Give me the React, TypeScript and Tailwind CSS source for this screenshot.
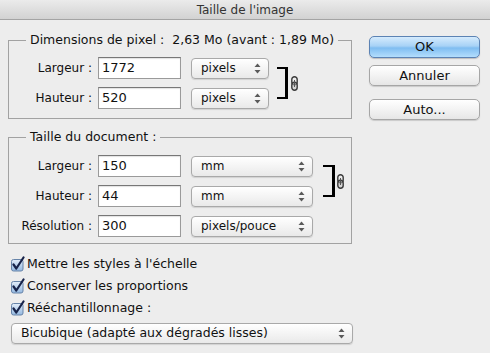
import React from "react"

const font = "font-['DejaVu_Sans','Lucida_Grande',sans-serif]"

const Arrows: React.FC = () => (
  <svg width="7" height="11" viewBox="0 0 7 11" className="shrink-0">
    <path d="M3.5 0.5 L6.5 4 L0.5 4 Z" fill="#5a5a5a" />
    <path d="M3.5 10.5 L6.5 7 L0.5 7 Z" fill="#5a5a5a" />
  </svg>
)

const Select: React.FC<{ label: string, width: string }> = ({ label, width }) => (
  <div className={ `${ width } h-[21px] flex items-center justify-between pl-[9px] pr-[7px] rounded-[4px] border border-[#a9a9a9] bg-[linear-gradient(#ffffff,#f4f4f4_50%,#e9e9e9)] shadow-[0_1px_1px_rgba(0,0,0,0.12)]` }>
    <span className="leading-none">{ label }</span>
    <Arrows />
  </div>
)

const Input: React.FC<{ value: string }> = ({ value }) => (
  <div className="w-[83px] h-[22px] flex items-center pl-[3px] bg-white border border-[#9a9a9a] border-t-[#777] shadow-[inset_0_1px_1px_rgba(0,0,0,0.12)] text-[13px]">
    { value }
  </div>
)

const Row: React.FC<{ label: string, value: string, unit: string, selectWidth: string }> = ({ label, value, unit, selectWidth }) => (
  <div className="flex items-center h-[22px]">
    <span className="w-[83px] text-right whitespace-nowrap">{ label }</span>
    <div className="ml-[6px]"><Input value={ value }/></div>
    <div className="ml-[10px]"><Select label={ unit } width={ selectWidth }/></div>
  </div>
)

const Chain: React.FC = () => (
  <svg width="7" height="15" viewBox="0 0 7 15" className="shrink-0">
    <rect x="0.8" y="0.8" width="5.4" height="8" rx="2.7" fill="none" stroke="#3a3a3a" strokeWidth="1.4" />
    <rect x="0.8" y="6.2" width="5.4" height="8" rx="2.7" fill="#bdbdbd" fillOpacity="0.5" stroke="#3a3a3a" strokeWidth="1.4" />
    <line x1="3.5" y1="4" x2="3.5" y2="11" stroke="#555" strokeWidth="1" />
  </svg>
)

const Checkbox: React.FC<{ label: string }> = ({ label }) => (
  <div className="flex items-center h-[22px]">
    <svg width="16" height="16" viewBox="0 0 16 16" className="ml-[10px] shrink-0">
      <defs>
        <linearGradient id="cb" x1="0" y1="0" x2="0" y2="1">
          <stop offset="0" stopColor="#e4eefa" />
          <stop offset="1" stopColor="#93b8e0" />
        </linearGradient>
      </defs>
      <rect x="1.5" y="3.5" width="11.5" height="11.5" rx="2" fill="url(#cb)" stroke="#6683a8" />
      <path d="M3.5 8.5 L6.3 12.5 L13.5 1.5" fill="none" stroke="#17234a" strokeWidth="2.2" strokeLinecap="round" strokeLinejoin="round" />
    </svg>
    <span className="ml-[1px] text-[12.5px]">{ label }</span>
  </div>
)

const Button: React.FC<{ label: string, primary?: boolean }> = ({ label, primary }) => (
  <div className={ primary
    ? "h-[22px] flex items-center justify-center rounded-[5px] border border-[#5c83b4] bg-[linear-gradient(#d5ebfd,#a7d2f6_45%,#7fbdf1_55%,#b3defd)] shadow-[0_1px_1px_rgba(0,0,0,0.2)] text-[13px]"
    : "h-[21px] flex items-center justify-center rounded-[5px] border border-[#a6a6a6] bg-[linear-gradient(#ffffff,#f3f3f3_50%,#e6e6e6)] shadow-[0_1px_1px_rgba(0,0,0,0.15)] text-[13px]" }>
    { label }
  </div>
)

export default function App() {
  return (
    <div className={ `${ font } w-[490px] h-[353px] bg-[#ededed] text-[12px] text-[#111] overflow-hidden` }>
      <div className="h-[20px] flex items-center justify-center bg-[linear-gradient(#ebebeb,#d2d2d2)] border-b border-[#a4a4a4] text-[#333]">
        Taille de l'image
      </div>
      <div className="flex pl-[8px]">
        <div className="w-[344px]">
          <fieldset className="mt-[12px] border border-[#a2a2a2] pb-[9px] pt-[9px]">
            <legend className="ml-[17px] px-[4px] leading-[16px] text-[12.5px]">Dimensions de pixel :&nbsp; 2,63 Mo (avant : 1,89 Mo)</legend>
            <div className="flex">
              <div className="flex flex-col gap-[8px]">
                <Row label="Largeur :" value="1772" unit="pixels" selectWidth="w-[78px]" />
                <Row label="Hauteur :" value="520" unit="pixels" selectWidth="w-[78px]" />
              </div>
              <div className="ml-[8px] mt-[10px] w-[11px] h-[32px] border-y-2 border-r-[3px] border-black" />
              <div className="ml-[3px] mt-[19px]"><Chain /></div>
            </div>
          </fieldset>
          <fieldset className="mt-[10px] border border-[#a2a2a2] pt-[10px] pb-[6px]">
            <legend className="ml-[17px] px-[4px] leading-[16px] text-[12.5px]">Taille du document :</legend>
            <div className="flex">
              <div className="flex flex-col gap-[8px]">
                <Row label="Largeur :" value="150" unit="mm" selectWidth="w-[122px]" />
                <Row label="Hauteur :" value="44" unit="mm" selectWidth="w-[122px]" />
                <Row label="Résolution :" value="300" unit="pixels/pouce" selectWidth="w-[122px]" />
              </div>
              <div className="ml-[10px] mt-[10px] w-[12px] h-[32px] border-y-2 border-r-[3px] border-black" />
              <div className="ml-[2px] mt-[19px]"><Chain /></div>
            </div>
          </fieldset>
          <div className="mt-[9px] flex flex-col -ml-[8px]">
            <Checkbox label="Mettre les styles à l'échelle" />
            <Checkbox label="Conserver les proportions" />
            <Checkbox label="Rééchantillonnage :" />
          </div>
          <div className="mt-[4px] ml-[3px] text-[12.5px]">
            <Select label="Bicubique (adapté aux dégradés lisses)" width="w-[342px]" />
          </div>
        </div>
        <div className="ml-[17px] w-[111px] mt-[16px] flex flex-col">
          <Button label="OK" primary />
          <div className="mt-[7px]"><Button label="Annuler" /></div>
          <div className="mt-[13px]"><Button label="Auto..." /></div>
        </div>
      </div>
    </div>
  )
}
